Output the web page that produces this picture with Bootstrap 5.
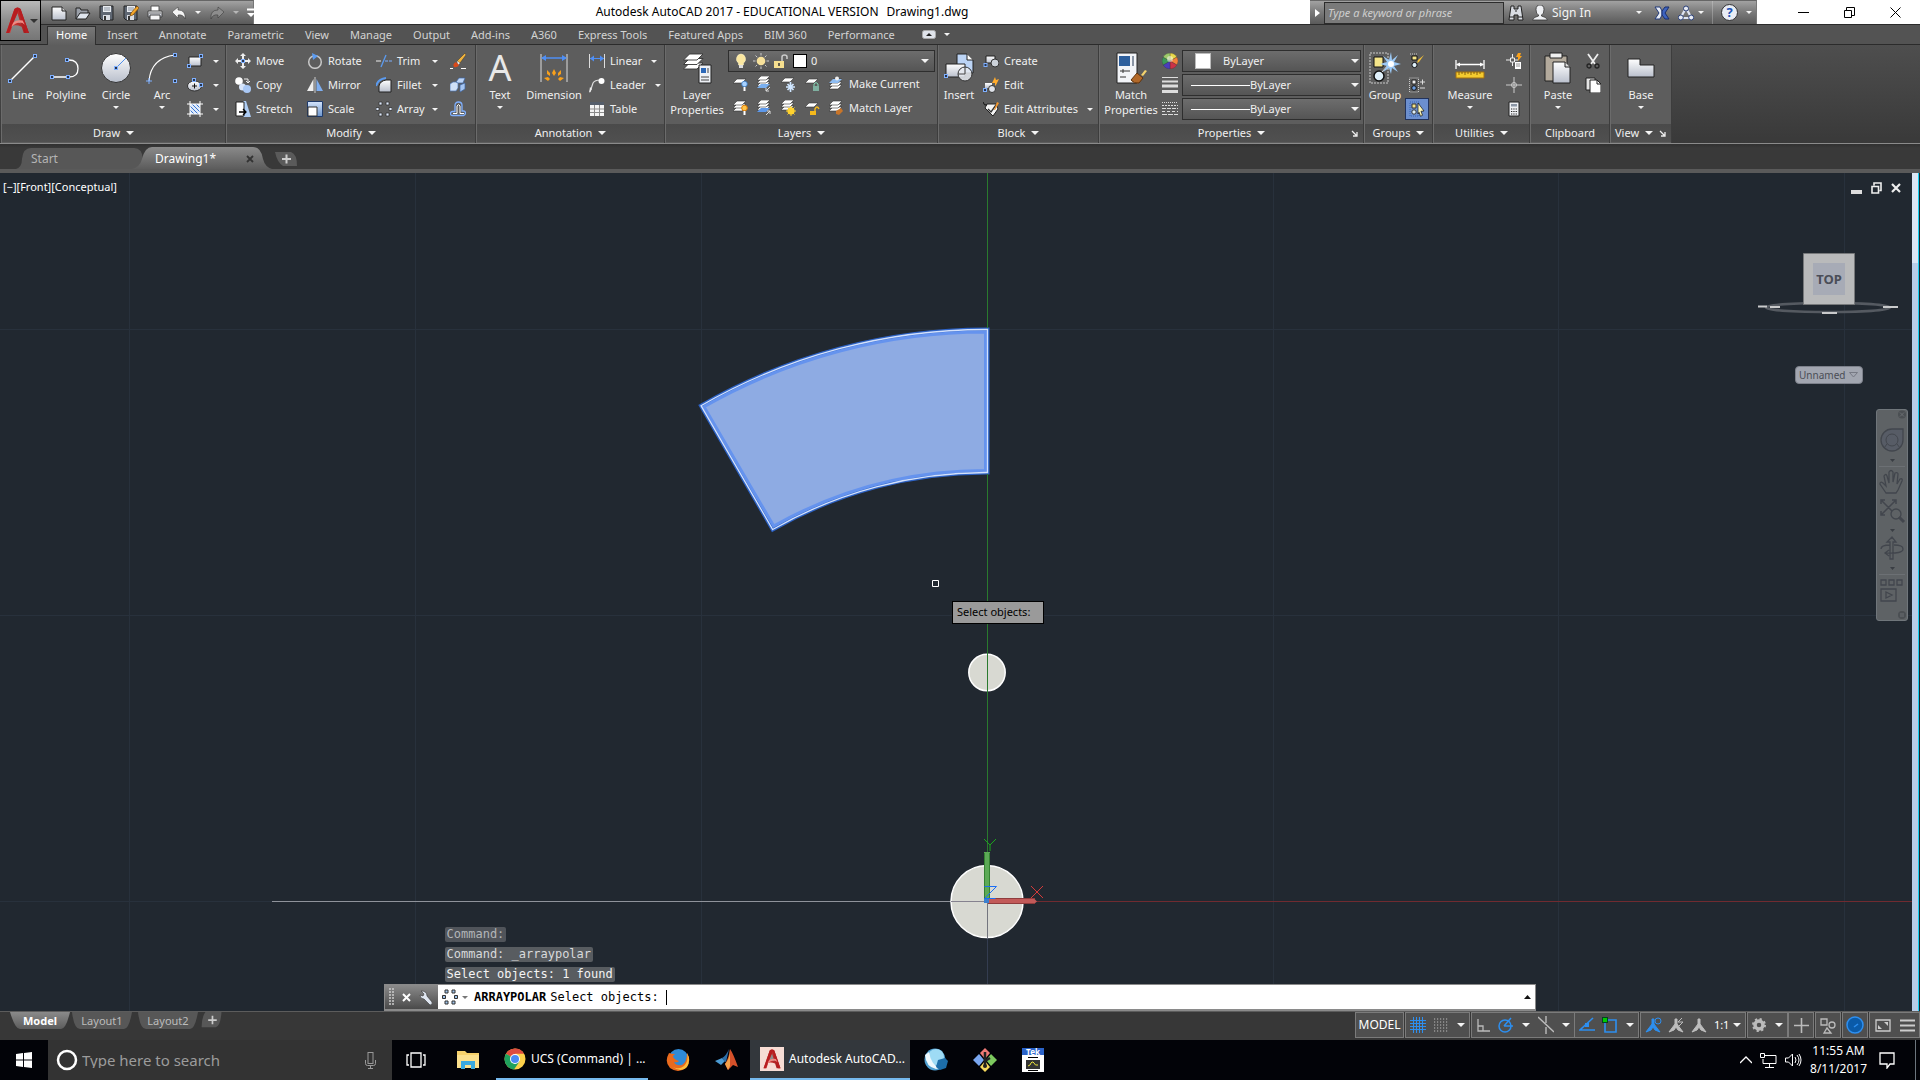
<!DOCTYPE html>
<html lang="en">
<head>
<meta charset="utf-8">
<meta name="viewport" content="width=device-width, initial-scale=1">
<title>Autodesk AutoCAD 2017</title>
<link rel="stylesheet" href="https://cdn.jsdelivr.net/npm/bootstrap@5.3.0/dist/css/bootstrap.min.css">
<style>
body{font-family:"Noto Sans","Open Sans",sans-serif;font-size:11px;line-height:16px;color:#f0f0f0;background:#373737;min-height:100vh;overflow:hidden}
button,select,input{font:inherit;color:inherit;background:none;border:0;padding:0;margin:0}
svg{display:block;flex:none}
.s16{width:16px;height:16px}.s32{width:32px;height:32px}
.tri{width:0;height:0;border:3px solid transparent;border-top:3px solid #f4f4f4;border-bottom:0;flex:none;display:inline-block}
.tri.big{border-width:4px 4px 0}
.tri.dark{border-top-color:#333}
.tri.grey{border-top-color:#777}
/* title bar */
.titlebar{height:24px;background:#fff;color:#000}
.appbtn{position:absolute;left:0;top:0;width:41px;height:41px;background:linear-gradient(#b9b9b9,#8d8d8d 50%,#767676);border:1px solid #000;z-index:5}
.chrome{background:linear-gradient(#a2a2a2,#7c7c7c 45%,#5a5a5a);border-top:1px solid #666;border-right:1px solid #777;color:#f4f4f4}
.qat{margin-left:41px;width:213px;padding-left:10px}
.qat button,.info button{flex:none;display:flex;align-items:center;justify-content:center}
.qat .redo{color:#8d8d8d}
.fs12{font-size:12px}
.info{width:447px}
.info .fold{width:14px}
.seek{width:180px;height:22px;background:#7a7a7a;border:1px solid #2c2c2c;color:#d6d6d6;font-style:italic;padding-left:3px}
.seek::placeholder{color:#cfcfcf;opacity:1}
.winbtns{width:163px;padding-right:2px}
.winbtns button{width:46px;display:flex;justify-content:center;align-items:center}
/* ribbon */
.rtabs{height:21px;background:#535353;border-top:1px solid #2b2b2b;border-bottom:1px solid #2b2b2b;padding-left:47px;gap:1px}
.rtabs .rtab{padding:0 10px;color:#d3d3d3;text-decoration:none;line-height:19px;white-space:nowrap}
.rtabs .rtab.on{padding:0 8px;margin-top:1px;background:linear-gradient(#787878,#5e5e5e);border:1px solid #2f2f2f;border-bottom:0;color:#fff;line-height:16px;height:19px}
.ribbon{height:99px;background:linear-gradient(#4e4e4e,#393939);border-bottom:1px solid #8a8a8a;padding-left:1px}
.panel{background:#5d5d5d;border-left:1px solid #6b6b6b;border-right:1px solid #3d3d3d;flex:none}
.pbody{height:79px;padding-top:4px}
.plabel{height:18px;background:linear-gradient(#4a4a4a,#505050);display:flex;align-items:center;justify-content:center;gap:6px}
.plabel .launch{position:absolute;right:4px;top:6px}
.bigb{display:flex;flex-direction:column;align-items:center;line-height:15px;white-space:nowrap;flex:none;padding-top:3px}
.bigb svg{margin-bottom:3px;overflow:visible}
.bigb .tri{margin-top:4px}
.rb{display:flex;align-items:center;height:24px;gap:5px;white-space:nowrap;text-align:left}
.rb .tri{margin-left:auto}
.combo{display:flex;align-items:center;border:1px solid #2e2e2e;background:linear-gradient(#6d6d6d,#555);height:22px}
.combo select{appearance:none;flex:1;min-width:0;outline:0}
.combo .tri{margin-right:1px}
.combos{gap:2px;padding-top:1px}
.swatch{background:#fff;width:14px;height:14px;border:1px solid #000;flex:none}
.swatch.soft{width:16px;height:16px;border-color:#bbb}
.lineseg{width:59px;height:1px;background:#fff;flex:none}
.lgrid{display:grid;grid-template-columns:repeat(4,24px) auto;height:24px;align-items:center;padding-left:4px}
.picked{background:#6c8fce;border:1px solid #22335c;height:22px;width:24px;margin:1px 0 0 -4px;padding-left:3px}
.w38{width:38px}.w40{width:40px}.w46{width:46px}.w54{width:54px}.w62{width:62px}.w69{width:69px}.w72{width:72px}
.p-draw{width:225px}.p-mod{width:250px}.p-ann{width:189px}.p-lay{width:273px}.p-blk{width:161px}.p-prop{width:265px}.p-grp{width:69px}.p-utl{width:97px}.p-clip{width:80px}.p-view{width:62px}
.p-draw .pbody{padding-left:1px}
.p-draw .drawmore{padding-left:6px}
.p-lay .pbody,.p-prop .pbody{padding-left:4px;padding-right:2px}
/* file tabs */
.ftabs{height:29px;background:linear-gradient(#303030,#393939 4px);border-bottom:4px solid #5a5a5a;padding:3px 0 0 20px;font-size:12px}
.ftab{height:22px;width:124px;position:relative;padding:2px 14px 0 11px;color:#b4b4b4;display:flex;align-items:center;text-decoration:none}
.ftab svg.shape{position:absolute;left:0;top:0;width:100%;height:100%;overflow:visible}
.ftab span,.ftab button{position:relative}
.newtab{margin:2px 0 0 6px}
/* canvas */
.space{background:#212830;flex:1;min-height:0}
.vscroll{width:7px;background:linear-gradient(#dbe6f5 90px,#b9cee9 90px);border-right:1px solid #16d0f2;margin-right:1px}
.draw{position:absolute;inset:0;width:100%;height:100%}
.vplabel{position:absolute;left:3px;top:6px;color:#fff}
.mdi{position:absolute;right:11px;top:9px;gap:9px}
.prompt{position:absolute;left:952px;top:428px;width:92px;height:23px;background:#9a9a9a;border:1px solid #000;color:#000;padding-left:4px;line-height:19px}
.ucsname{position:absolute;right:49px;top:193px;width:68px;height:18px;border-radius:4px;background:#a2a6b0;border:1px solid #7d818b;color:#4a4d55;font-size:10px;padding-left:3px}
.navbarv{position:absolute;right:4px;top:236px;width:32px;height:212px;background:#5e6265;border:1px solid #70767b;border-radius:3px}
.cmdlog{position:absolute;left:23.25%;bottom:29px;gap:5px}
.mono,.cmdlog div{font-family:"DejaVu Sans Mono","Liberation Mono",monospace;font-size:12px}
.cmdlog div{background:#585c60;border-radius:2px;padding:0 2px;line-height:15px;color:#f4f4f4}
.cmdlog div:nth-child(1){background:#50545a;color:#b3b6b9}
.cmdlog div:nth-child(2){color:#d8dadc}
.cmd{position:absolute;left:384px;right:376px;bottom:0;height:27px;background:#fff;border:1px solid #8a8a8a;border-bottom-width:2px;color:#000}
.cmdl{width:53px;background:linear-gradient(#8b8b8b,#4a4a4a)}
.cmd input{color:#000;outline:0;width:16ch}
.cmd .recent{margin:0 6px 0 4px}
.caretbar{width:1px;height:15px;background:#000}
.cmd label{font-weight:700}
/* status */
.status{height:29px;border-top:1px solid #5c5c5c}
.ltabs{padding-left:10px}
.ltab{height:18px;width:68px;position:relative;display:flex;justify-content:center;align-items:center;color:#bcbcbc;margin-right:-2px}
.ltab.first{width:60px}.ltab.plus{width:24px}
.ltab svg{position:absolute;inset:0;width:100%;height:100%}
.ltab span{position:relative;line-height:15px;padding-bottom:2px}
.stools{color:#bdbdbd}
.sg{height:26px;background:#4f4f4f;border:1px solid #7b7b7b;display:flex;align-items:center;justify-content:space-around;margin-right:1px;flex:none}
.sg button{display:flex;align-items:center}
.sg .lit{color:#2d8ff0}
.g26{width:26px}.g41{width:41px}.g49{width:49px}.g51{width:51px}.g65{width:65px}.g103{width:103px}.g106{width:106px}
/* taskbar */
.task{height:40px;background:#020308;color:#fff;font-size:12px}
.search{width:344px;background:#333;color:#999}
.search input{font-size:15px;color:#aaa;flex:1;outline:0;min-width:0}
.search input::placeholder{color:#9c9c9c;opacity:1}
.tb{display:flex;align-items:center;justify-content:center;height:40px;width:48px;flex:none;white-space:nowrap}
.tb.wide{width:56px}.tb.mid{width:51px}
.tb.run{border-bottom:2px solid #76b9ed;gap:5px;justify-content:flex-start;width:152px}
.tb.run.on{width:160px;background:#33373c;padding-left:10px}
.clock{line-height:18px;text-align:center}
.desk{width:5px;height:40px;margin-left:12px;border-left:1px solid #6c757d}
</style>
<script src="https://cdn.jsdelivr.net/npm/bootstrap@5.3.0/dist/js/bootstrap.bundle.min.js"></script>
</head>
<body class="d-flex flex-column vh-100">
<svg width="0" height="0" class="position-absolute" aria-hidden="true">
<defs>
<linearGradient id="gw" x1="0" y1="0" x2="0" y2="1"><stop offset="0" stop-color="#fff"/><stop offset="1" stop-color="#b9bfcc"/></linearGradient>
<linearGradient id="gb" x1="0" y1="0" x2="0" y2="1"><stop offset="0" stop-color="#d4e4fb"/><stop offset="1" stop-color="#6c95cc"/></linearGradient>
<linearGradient id="gt" x1="0" y1="0" x2="0" y2="1"><stop offset="0" stop-color="#8a8a8a"/><stop offset="1" stop-color="#5c5c5c"/></linearGradient>
<linearGradient id="gr" x1="0" y1="0" x2="1" y2="0"><stop offset="0" stop-color="#e04a45"/><stop offset="1" stop-color="#9c1518"/></linearGradient>
<g id="sheet"><path d="M5 0h9l-4 4H1z" fill="#fff" stroke="#333" stroke-width=".6"/></g>
<g id="stack"><use href="#sheet" y="8"/><use href="#sheet" y="5"/><use href="#sheet" y="2"/></g>
<g id="node"><rect x="-1.5" y="-1.5" width="3" height="3" fill="#26344d" stroke="#7fb0ff"/></g>
</defs>
<symbol id="A" viewBox="0 0 24 26"><path d="M1 25L9 2q3-3 6 0l8 23h-5l-2-6q-5-2-9-1l-2 7z" fill="url(#gr)"/><path d="M12 6l-4 9q4-1 7 1z" fill="#8f8f8f"/><path d="M9 2L1 25h3L13 3l7 22h3L15 2q-3-3-6 0z" fill="#b71d20"/><path d="M6 19q8-7 13-2l-2-4q-6-1-9 2z" fill="#f08a84"/></symbol>
<symbol id="new" viewBox="0 0 16 16"><path d="M1 2h10l4 4v9H1z" fill="url(#gw)" stroke="#222"/><path d="M11 2v4h4" fill="#ccc" stroke="#222"/></symbol>
<symbol id="open" viewBox="0 0 16 16"><path d="M1 14V3h4l1 2h7v3" fill="#9a9fa8" stroke="#222"/><path d="M1 14l4-6h10l-4 6z" fill="#dfe5ee" stroke="#222"/></symbol>
<symbol id="save" viewBox="0 0 16 16"><path d="M1 1h13v14H3l-2-2z" fill="#5f6773" stroke="#222"/><path d="M4 1h8v6H4z" fill="#e8ebf0"/><path d="M4 10h7v5H4z" fill="#d9dde5"/><path d="M5 3h6M5 5h6" stroke="#8a93a0"/><path d="M5 11h2v4H5z" fill="#333"/></symbol>
<symbol id="pen" viewBox="0 0 16 16"><path d="M14 1l2 2-6 7-3 1 1-3z" fill="#f4a62a" stroke="#6b3a00" stroke-width=".6"/></symbol>
<symbol id="print" viewBox="0 0 16 16"><path d="M4 1h8v6H4z" fill="#fff" stroke="#555"/><path d="M1 6h14v6H1z" fill="url(#gw)" stroke="#444"/><path d="M3 10h10v5H3z" fill="#f7f7f7" stroke="#444"/><path d="M2 8h12" stroke="#666"/></symbol>
<symbol id="undo" viewBox="0 0 16 16"><path d="M1 7l6-5v3q8 0 7 9q-2-5-7-4v3z" fill="currentColor" stroke="#333" stroke-width=".5"/></symbol>
<symbol id="line" viewBox="0 0 32 32"><path d="M3 29L28 4" stroke="#fff" stroke-width="1.4"/><use href="#node" x="3" y="29"/><use href="#node" x="28" y="4"/></symbol>
<symbol id="pline" viewBox="0 0 32 32"><path d="M2 25h17q9 0 9-8.500t-9-8.500h-2" fill="none" stroke="#fff" stroke-width="1.3"/><use href="#node" x="2" y="25"/><use href="#node" x="18" y="25"/><use href="#node" x="17" y="8"/></symbol>
<symbol id="circ" viewBox="0 0 32 32"><circle cx="16" cy="16" r="14.500" fill="url(#gw)" stroke="#333"/><path d="M16 16l10-10" stroke="#4f8fea"/><use href="#node" x="16" y="16"/></symbol>
<symbol id="arc" viewBox="0 0 32 32"><path d="M3 29Q5 6 29 3" fill="none" stroke="#fff" stroke-width="1.2"/><path d="M3 26v6M0 29h6" stroke="#7fb0ff"/><use href="#node" x="29" y="3"/><use href="#node" x="29" y="29"/></symbol>
<symbol id="rect" viewBox="0 0 16 16"><path d="M2 4h12v9H2z" fill="url(#gw)" stroke="#222"/><use href="#node" x="2" y="13"/><use href="#node" x="14" y="3"/></symbol>
<symbol id="ell" viewBox="0 0 16 16"><ellipse cx="7.500" cy="9" rx="7" ry="5" fill="url(#gw)" stroke="#333"/><path d="M7.500 6.500v5M5 9h5" stroke="#111"/><use href="#node" x="7" y="3"/><use href="#node" x="14" y="8"/></symbol>
<symbol id="hatch" viewBox="0 0 16 16"><path d="M3 3h10v10H3z" fill="#dce9fb"/><path d="M3 5l8 8M3 9l4 4M5 3l8 8M9 3l4 4" stroke="#3a75cf"/><path d="M0 3h16M0 13h16M3 0v16M13 0v16" stroke="#fff"/></symbol>
<symbol id="move" viewBox="0 0 16 16"><path d="M8 0l3 3H9v3H7V3H5zM8 16l3-3H9v-3H7v3H5zM0 8l3-3v2h3v2H3v2zM16 8l-3-3v2h-3v2h3v2z" fill="#eee"/><use href="#node" x="8" y="8"/></symbol>
<symbol id="rot" viewBox="0 0 16 16"><circle cx="8" cy="9" r="6.300" fill="none" stroke="#c9c9c9" stroke-width="1.5"/><path d="M5 0l6 3-5 4z" fill="#5b9bf0"/></symbol>
<symbol id="trim" viewBox="0 0 16 16"><path d="M0 8h5" stroke="#eee"/><path d="M10 2L5 14" stroke="#5b9bf0" stroke-width="1.300"/><path d="M9 8h7" stroke="#7fb0ff" stroke-dasharray="3 1"/></symbol>
<symbol id="erase" viewBox="0 0 16 16"><path d="M15 0l1 2-6 8-3-2z" fill="#f0b23c" stroke="#333" stroke-width=".5"/><path d="M7 8l3 2-2 2z" fill="#eee"/><path d="M6 9l3 3q-2 3-5 2-2-3 2-5z" fill="#d94a1a"/><path d="M0 15.500h3M11 15.500h5" stroke="#fff"/></symbol>
<symbol id="copy" viewBox="0 0 16 16"><circle cx="4" cy="4" r="3.800" fill="#fff"/><circle cx="7.500" cy="10" r="3.500" fill="#d7e5fa"/><circle cx="12" cy="12" r="4" fill="#a9c8f5"/><path d="M9 2h4v4m-2-2l2 2 2-2" fill="none" stroke="#eee"/></symbol>
<symbol id="mirror" viewBox="0 0 16 16"><path d="M6.500 2v12H0z" fill="#eee"/><path d="M9.500 2v12H16z" fill="#7eaef0"/><path d="M8 0v16" stroke="#ccc"/></symbol>
<symbol id="fillet" viewBox="0 0 16 16"><path d="M3 15V9q1-5 7-6h5v12z" fill="url(#gw)" stroke="#222"/><path d="M0 9Q2 2 10 1" fill="none" stroke="#5b9bf0" stroke-width="2"/></symbol>
<symbol id="expl" viewBox="0 0 16 16"><path d="M0 7l3-2h5v6l-2 3H0z" fill="#cfe0f7" stroke="#4a76b5" stroke-width=".7"/><path d="M6 5l3-4h6l-2 5H8z" fill="#bcd4f7" stroke="#3c66a3" stroke-width=".7"/><path d="M10 8l5-2v6l-5 3z" fill="#a5c5f2" stroke="#3c66a3" stroke-width=".7"/></symbol>
<symbol id="stretch" viewBox="0 0 16 16"><path d="M8 0h3l5 16H8z" fill="#aecdf4"/><path d="M1 1h8v14H1z" fill="#fff" stroke="#222"/><path d="M4 11h7m-3-3l3 3-3 3" fill="none" stroke="#000" stroke-width="1.300"/></symbol>
<symbol id="scale" viewBox="0 0 16 16"><path d="M.5.500h15v15H.5z" fill="url(#gb)" stroke="#1e3a6b"/><path d="M1 6h9v9H1z" fill="#fff" stroke="#333"/></symbol>
<symbol id="array" viewBox="0 0 16 16"><path d="M3 1h3v3H3zM10 1h3v3h-3zM0 6.500h3v3H0zM13 6.500h3v3h-3zM3 12h3v3H3zM10 12h3v3h-3z" fill="#dde8fa" stroke="#333" stroke-width=".8"/></symbol>
<symbol id="arrayd" viewBox="0 0 16 16"><path d="M3 1h3v3H3zM10 1h3v3h-3zM.5 6.500h3v3h-3zM12.500 6.500h3v3h-3zM3 12h3v3H3zM10 12h3v3h-3z" fill="#9ec3ea" stroke="#333"/></symbol>
<symbol id="offset" viewBox="0 0 16 16"><path d="M5 11V4.500Q5 1 8.500 1T12 4.500V10h1.500q2 0 2 2t-2 2.500h-11q-2 0-2-2t2-2H5" fill="none" stroke="#7fb0ff" stroke-width="1.300"/><path d="M3 12.500h4V5q1.500-3 3 0v7.500h4" fill="none" stroke="#fff"/></symbol>
<symbol id="dim" viewBox="0 0 32 32"><path d="M3 2v28M29 2v28" stroke="#ddd"/><path d="M4 6h24" stroke="#4f8ff5" stroke-width="1.500"/><path d="M3 6l5-3v6zM29 6l-5-3v6z" fill="#4f8ff5"/><g fill="#f8a01b"><path d="M16 17l2 4-2 3-2-3zM9 18l3 3v3l-3-2zM23 18l-3 3v3l3-2zM6 26l4-1 2 2-2 2zM26 26l-4-1-2 2 2 2z"/></g></symbol>
<symbol id="lin" viewBox="0 0 16 16"><path d="M.5 1v14M15.500 1v14" stroke="#ddd"/><path d="M1 5.500h14" stroke="#4f8ff5"/><path d="M1 5.500l4-3v6zM15 5.500l-4-3v6z" fill="#4f8ff5"/></symbol>
<symbol id="lead" viewBox="0 0 16 16"><path d="M1 15L4 6q2-3 7-3" fill="none" stroke="#ddd" stroke-width="1.200"/><circle cx="12.500" cy="4" r="3" fill="#fff"/><path d="M0 16l1-6 2 2z" fill="#eee"/></symbol>
<symbol id="table" viewBox="0 0 16 16"><path d="M1 1h14v14H1z" fill="#f4f4f4"/><path d="M1 1h14v3H1z" fill="#555e6b"/><path d="M1 8h14M1 11.500h14M5.500 4v11M10.500 4v11" stroke="#8b8b8b"/></symbol>
<symbol id="layp" viewBox="0 0 32 32"><g transform="translate(1 -1) scale(1.500)"><use href="#stack"/></g><path d="M18 13h12v18H18z" fill="#eef1f6" stroke="#222"/><path d="M20 16h5v5h-5z" fill="#2c68b8"/><path d="M27 16v5M20 25h8M20 28h8" stroke="#444"/></symbol>
<symbol id="bulb" viewBox="0 0 16 16"><path d="M8 1a5 5 0 0 0-2.500 9v2h5v-2A5 5 0 0 0 8 1z" fill="#fbe7a0" stroke="#fff6cf" stroke-width=".5"/><path d="M6 12h4v3H6z" fill="#ddd"/></symbol>
<symbol id="sun" viewBox="0 0 16 16"><path d="M8 0v16M0 8h16M2.500 2.500l11 11M13.500 2.500l-11 11" stroke="#ccc" stroke-dasharray="2.500 11"/><circle cx="8" cy="8" r="4.300" fill="#f7e19b"/></symbol>
<symbol id="lock" viewBox="0 0 16 16"><path d="M9 8V4q0-2 2.500-2T14 4v2" fill="none" stroke="#ccc" stroke-width="1.500"/><path d="M1 8h10v7H1z" fill="#f6df8f"/><path d="M6 10v3" stroke="#333" stroke-width="1.500"/></symbol>
<symbol id="l1" viewBox="0 0 16 16"><use href="#sheet" y="3"/><circle cx="12.500" cy="8" r="2.800" fill="#a8d2ff" stroke="#2f78c8" stroke-width=".7"/><path d="M12.500 11v4" stroke="#fff" stroke-width="2"/></symbol>
<symbol id="l2" viewBox="0 0 16 16"><use href="#stack" y="-2"/><path d="M5 8h9l-4 4H1z" fill="#7ab0f0"/><path d="M14 11l-4 4m0-3v3h3" stroke="#ddd" fill="none"/></symbol>
<symbol id="l3" viewBox="0 0 16 16"><use href="#sheet" y="2"/><path d="M10.500 6v10M6 11h9M7.500 8l6 6M13.500 8l-6 6" stroke="#cfe6ff" stroke-width="1.700"/></symbol>
<symbol id="l4" viewBox="0 0 16 16"><use href="#sheet" y="3"/><path d="M9 10h6v5H9z" fill="#7fb0a0"/><path d="M10 10V8q2-3 4 0v2" fill="none" stroke="#8db"/></symbol>
<symbol id="l5" viewBox="0 0 16 16"><use href="#stack" y="1"/><path d="M5 3h9l-4 4H1z" fill="#8dbcf2"/><circle cx="9" cy="2.500" r="2" fill="#eee"/></symbol>
<symbol id="m1" viewBox="0 0 16 16"><use href="#stack" y="-1"/><circle cx="12.500" cy="8" r="2.800" fill="#ffc54a" stroke="#e07c00"/><path d="M12.500 11v4" stroke="#fff" stroke-width="2"/></symbol>
<symbol id="m2" viewBox="0 0 16 16"><use href="#stack" y="-2"/><path d="M5 8h9l-4 4H1z" fill="#5d98ea"/><path d="M10 15l4-4m-3 0h3v3" stroke="#ddd" fill="none"/></symbol>
<symbol id="m3" viewBox="0 0 16 16"><use href="#stack" y="-2"/><circle cx="11" cy="11" r="3.600" fill="#ffd22e"/><path d="M11 6v10M6 11h10M7.500 7.500l7 7M14.500 7.500l-7 7" stroke="#ffd22e"/></symbol>
<symbol id="m4" viewBox="0 0 16 16"><use href="#sheet" y="3"/><path d="M6 11h6v4H6z" fill="#f5b91c"/><path d="M11 11V9q2-4 4 0" fill="none" stroke="#f5b91c" stroke-width="1.400"/></symbol>
<symbol id="m5" viewBox="0 0 16 16"><use href="#stack" y="-1"/><path d="M8 11l5-3 2 3-4 4-3-1z" fill="#c8752a"/></symbol>
<symbol id="insert" viewBox="0 0 32 32"><path d="M14 2h10l6 6v13H14z" fill="#bcd4f5" stroke="#222"/><path d="M24 2v6h6" fill="#fff" stroke="#222"/><path d="M3 12h19v13H3z" fill="url(#gw)" stroke="#222"/><circle cx="22" cy="22" r="7" fill="#e6eaf0" fill-opacity=".85" stroke="#333"/><path d="M15 22h7v-7" fill="none" stroke="#444"/><use href="#node" x="3" y="24"/></symbol>
<symbol id="create" viewBox="0 0 16 16"><path d="M3 3h9v7H3z" fill="url(#gw)" stroke="#222"/><circle cx="12" cy="10" r="4" fill="#ccd2da" stroke="#333"/><use href="#node" x="2.500" y="12"/></symbol>
<symbol id="edit" viewBox="0 0 16 16"><path d="M2 6h7v5H2z" fill="url(#gw)"/><circle cx="9" cy="12" r="3.500" fill="#dfe3ea" stroke="#333"/><path d="M12 0l1 3 3-1-3 6-1 1 0-3-3 0z" fill="#ffab2d"/><use href="#node" x="2" y="13"/></symbol>
<symbol id="attr" viewBox="0 0 16 16"><path d="M4 3h9l2 5-5 7-8-8z" fill="#f4f4f4" stroke="#222"/><path d="M5 8l3 3 5-7" fill="none" stroke="#333" stroke-width="1.400"/><path d="M14 1l2 1-4 7-1 0z" fill="#f4962a"/><path d="M0 1q1 4 4 3" fill="none" stroke="#111"/></symbol>
<symbol id="mprop" viewBox="0 0 32 32"><path d="M2 1h20v30H2z" fill="#f2f4f8" stroke="#222"/><path d="M4 4h11v10H4z" fill="#2d5f9d"/><path d="M18 4v10" stroke="#8a95a5" stroke-width="2"/><path d="M5 19h10M8 17v4M5 25h6" stroke="#333"/><path d="M30 18l2 1-4 5-2-1z" fill="#f5d36d"/><path d="M22 21l6 5-4 5q-5 1-8-3z" fill="#b2692a" stroke="#5e330e"/></symbol>
<symbol id="wheel" viewBox="0 0 16 16"><g stroke="#333" stroke-width=".3"><path d="M8 8V0a8 8 0 0 1 6.900 4z" fill="#e8d94a"/><path d="M8 8l6.900-4a8 8 0 0 1 0 8z" fill="#f5813a"/><path d="M8 8l6.900 4A8 8 0 0 1 8 16z" fill="#cc3147"/><path d="M8 8v8a8 8 0 0 1-6.900-4z" fill="#4a3dbb"/><path d="M8 8l-6.900 4a8 8 0 0 1 0-8z" fill="#3c9958"/><path d="M8 8L1.100 4A8 8 0 0 1 8 0z" fill="#9ecb6a"/></g><circle cx="8" cy="6" r="3" fill="#fff" fill-opacity=".5"/></symbol>
<symbol id="lw" viewBox="0 0 16 16"><path d="M0 .5h16" stroke="#ddd"/><path d="M0 4.500h16" stroke="#ddd" stroke-width="2"/><path d="M0 9h16M0 14.500h16" stroke="#ddd" stroke-width="3"/></symbol>
<symbol id="lt" viewBox="0 0 16 16"><g stroke="#ddd"><path d="M0 1.500h16" stroke-dasharray="1 1"/><path d="M0 4.500h16" stroke-dasharray="2 1"/><path d="M0 7.500h16" stroke-dasharray="4 1"/><path d="M0 10.500h16" stroke-dasharray="3 2"/><path d="M0 13.500h16" stroke-dasharray="5 1"/></g></symbol>
<symbol id="group" viewBox="0 0 32 32"><path d="M1 1h18v30H1z" fill="none" stroke="#ccc" stroke-dasharray="2 1"/><path d="M5 5h9v10H5z" fill="#f5e58a" stroke="#111"/><circle cx="10" cy="24" r="5" fill="#dff0fa" stroke="#111" stroke-width="1.500"/><path d="M13 20l7-8" stroke="#ddd"/><path d="M22 0l1 8 6-5-4 7 7 2-7 2 4 6-6-4-1 6-2-6-6 4 4-6-7-2 7-2-4-6 6 4z" fill="#9cc9f5"/><circle cx="22" cy="12" r="3" fill="#fff"/></symbol>
<symbol id="g1" viewBox="0 0 16 16"><path d="M1 1h8" stroke="#ccc" stroke-dasharray="1 1"/><path d="M3 3h5v4H3z" fill="#f5e58a" stroke="#111"/><circle cx="5.500" cy="12" r="2.600" fill="#dff0fa" stroke="#111"/><path d="M15 2l-5 7-2 1 1-3z" fill="#f5c136"/></symbol>
<symbol id="g2" viewBox="0 0 16 16"><path d="M.5 1h9v14h-9z" fill="none" stroke="#ccc" stroke-dasharray="1 1"/><path d="M3 3h4v4H3z" fill="#eee" stroke="#222"/><circle cx="5" cy="11" r="2.300" fill="#6c9de0" stroke="#111"/><path d="M11 5h5M13.500 2.500v5M11 11h5" stroke="#ddd"/></symbol>
<symbol id="g3" viewBox="0 0 16 16"><path d="M1 1h9v14H1z" fill="none" stroke="#3263b8" stroke-dasharray="1 1"/><path d="M3 3h4v4H3z" fill="#f5e58a" stroke="#333"/><circle cx="5" cy="11" r="2.200" fill="#dff0fa" stroke="#333"/><path d="M9 2l6 8-3 .3 1.500 4-2 1-1.500-4L9 13z" fill="#fbf6b8" stroke="#111" stroke-width=".7"/></symbol>
<symbol id="meas" viewBox="0 0 32 32"><path d="M2 8v9M30 8v9M3 12.500h26" stroke="#fff" stroke-width="1.300"/><path d="M2 12.500l4-2v4zM30 12.500l-4-2v4z" fill="#fff"/><path d="M2 20h28v6H2z" fill="#f4cb2f" stroke="#a4700f" stroke-width="1"/><path d="M5 20v3M8 20v2M11 20v3M14 20v2M17 20v3M20 20v2M23 20v3M26 20v2" stroke="#6e4a05" stroke-width=".8"/></symbol>
<symbol id="u1" viewBox="0 0 16 16"><path d="M0 7h4M9 7h3M6.500 1v4M6.500 9v4" stroke="#eee"/><path d="M4.500 5h4v4h-4z" fill="none" stroke="#eee"/><path d="M12 0l3 0-1 3h2l-4 5v-4h-2z" fill="#f9a11b"/><path d="M9 9h6v7H9z" fill="#fff"/><path d="M10.500 11h1m1 0h1m-3 2h1m1 0h1" stroke="#222"/></symbol>
<symbol id="u2" viewBox="0 0 16 16"><path d="M0 8h16M8 0v16" stroke="#ccc"/><circle cx="8" cy="8" r="2.500" fill="none" stroke="#ccc"/></symbol>
<symbol id="u3" viewBox="0 0 16 16"><path d="M3 1h10v14H3z" fill="#eef0f4" stroke="#222"/><path d="M5 3h6v2.500H5z" fill="#8b96a6"/><path d="M5 8h6M5 10.500h6M5 13h6" stroke="#222" stroke-dasharray="1.300 1"/></symbol>
<symbol id="paste" viewBox="0 0 32 32"><path d="M3 4h22v25H3z" fill="#b3aa9c" stroke="#222"/><path d="M8 1h12v5H8z" fill="#f0f0f0" stroke="#222"/><path d="M11 10h12l5 5v16H11z" fill="url(#gw)" stroke="#222"/><path d="M23 10v5h5" fill="#ddd" stroke="#222"/></symbol>
<symbol id="cut" viewBox="0 0 16 16"><path d="M3 1l7 10M13 1L6 11" stroke="#eee" stroke-width="1.800"/><circle cx="4" cy="13" r="2" fill="none" stroke="#222" stroke-width="1.300"/><circle cx="12" cy="13" r="2" fill="none" stroke="#222" stroke-width="1.300"/></symbol>
<symbol id="cp" viewBox="0 0 16 16"><path d="M1 1h9v12H1z" fill="#e5e5e5" stroke="#222"/><path d="M5 3h7l4 4v9H5z" fill="#fff" stroke="#222"/><path d="M12 3v4h4" fill="none" stroke="#222"/></symbol>
<symbol id="base" viewBox="0 0 32 32"><path d="M3 7h12v6h14v12H3z" fill="url(#gw)" stroke="#222"/></symbol>
<symbol id="launch" viewBox="0 0 8 8"><path d="M1 1l5 5M6 2v4H2" fill="none" stroke="#eee" stroke-width="1.300"/></symbol>
<symbol id="cadman" viewBox="0 0 16 16"><path d="M7 2h2v5l6 8-5-2-2-3-2 3-5 2 6-8z" fill="currentColor" stroke="currentColor"/></symbol>
</svg>

<header class="position-relative flex-shrink-0">
<button class="appbtn d-flex align-items-center" aria-label="Application menu"><svg width="25" height="27" class="ms-1"><use href="#A"/></svg><i class="tri big dark"></i></button>
<div class="titlebar d-flex">
 <div class="chrome qat d-flex align-items-center gap-2">
  <button aria-label="New"><svg class="s16"><use href="#new"/></svg></button>
  <button aria-label="Open"><svg class="s16"><use href="#open"/></svg></button>
  <button aria-label="Save"><svg class="s16"><use href="#save"/></svg></button>
  <button aria-label="Save as"><svg class="s16"><use href="#save"/><use href="#pen"/></svg></button>
  <button aria-label="Plot"><svg class="s16"><use href="#print"/></svg></button>
  <button aria-label="Undo"><svg class="s16"><use href="#undo"/></svg></button>
  <button aria-label="Undo list"><i class="tri"></i></button>
  <button aria-label="Redo" class="redo"><svg class="s16" viewBox="0 0 16 16"><g transform="translate(16 0) scale(-1 1)"><use href="#undo" width="16" height="16"/></g></svg></button>
  <button aria-label="Redo list"><i class="tri opacity-50"></i></button>
  <button aria-label="Customize toolbar"><svg width="8" height="10"><path d="M0 1.500h8" stroke="#fff" stroke-width="2"/><path d="M0 5h8L4 9z" fill="#fff"/></svg></button>
 </div>
 <div class="fs12 flex-fill d-flex justify-content-center align-items-center gap-2"><span>Autodesk AutoCAD 2017 - EDUCATIONAL VERSION</span><span>Drawing1.dwg</span></div>
 <div class="chrome info d-flex align-items-center">
  <button aria-label="Collapse search" class="fold"><svg width="5" height="8"><path d="M0 0l5 4-5 4z" fill="#fff"/></svg></button>
  <input class="seek" aria-label="Search help" placeholder="Type a keyword or phrase">
  <button aria-label="Search" class="ms-1"><svg class="s16" viewBox="0 0 16 16"><path d="M3 1h3v3h4V1h3l2 14h-5v-5H6v5H1z" fill="#d9dde4" stroke="#222"/><path d="M7 6h2M2 12h4M10 12h4" stroke="#222"/></svg></button>
  <button aria-label="Account" class="ms-2"><svg class="s16" viewBox="0 0 16 16"><path d="M8 0q4 0 4 4.500T9.500 10v1q5 1 6 4H.5q1-3 6-4v-1Q4 9 4 4.500T8 0z" fill="#eef0f4" stroke="#333" stroke-width=".8"/></svg></button>
  <button class="ms-1 fs12">Sign In</button>
  <button aria-label="Sign in menu" class="ms-auto"><i class="tri"></i></button>
  <button aria-label="Exchange apps" class="ms-2 ps-1"><svg width="16" height="16" viewBox="0 0 16 16"><path d="M1 2h5l2 4v4l-2 4H1l4-6z" fill="#e8ecf4" stroke="#223a7a"/><path d="M15 2h-4L8 6v4l3 4h4l-4-6z" fill="#3e64c0" stroke="#1b2f6d"/></svg></button>
  <button aria-label="A360" class="ms-2"><svg width="16" height="16" viewBox="0 0 16 16"><path d="M8 3L2.500 13h11z" fill="none" stroke="#dfe5f2" stroke-width="2.200"/><circle cx="8" cy="3.500" r="2.500" fill="#e8ecf4" stroke="#2a3f78"/><circle cx="2.800" cy="12.500" r="2.500" fill="#e8ecf4" stroke="#2a3f78"/><circle cx="13.200" cy="12.500" r="2.500" fill="#e8ecf4" stroke="#2a3f78"/></svg></button>
  <button aria-label="A360 menu" class="ms-1"><i class="tri"></i></button>
  <span class="vr mx-2"></span>
  <button aria-label="Help"><svg width="17" height="17"><circle cx="8.500" cy="8.500" r="8" fill="#e9edf5" stroke="#333"/><text x="8.500" y="13" text-anchor="middle" font-size="13" font-weight="700" fill="#2252b5">?</text></svg></button>
  <button aria-label="Help menu" class="mx-1 ps-1"><i class="tri"></i></button>
 </div>
 <div class="winbtns d-flex justify-content-end">
  <button aria-label="Minimize"><svg width="11" height="11"><path d="M0 5.500h11" stroke="#000"/></svg></button>
  <button aria-label="Restore"><svg width="11" height="11"><path d="M.5 3.500h7v7h-7zM2.500 3V.500h8v8H8" fill="none" stroke="#000"/></svg></button>
  <button aria-label="Close"><svg width="11" height="11"><path d="M.5.500l10 10M10.500.500l-10 10" stroke="#000"/></svg></button>
 </div>
</div>
<nav class="rtabs d-flex">
 <a class="rtab on" href="#">Home</a><a class="rtab" href="#">Insert</a><a class="rtab" href="#">Annotate</a><a class="rtab" href="#">Parametric</a><a class="rtab" href="#">View</a><a class="rtab" href="#">Manage</a><a class="rtab" href="#">Output</a><a class="rtab" href="#">Add-ins</a><a class="rtab" href="#">A360</a><a class="rtab" href="#">Express Tools</a><a class="rtab" href="#">Featured Apps</a><a class="rtab" href="#">BIM 360</a><a class="rtab" href="#">Performance</a>
 <button class="d-flex align-items-center gap-2 ms-3" aria-label="Minimize ribbon"><svg width="14" height="9"><rect x=".5" y=".5" width="13" height="8" rx="2" fill="#dfe3ea" stroke="#aaa"/><path d="M4 6l3-3 3 3z" fill="#222"/></svg><i class="tri"></i></button>
</nav>

<div class="ribbon d-flex">
 <section class="panel p-draw">
  <div class="pbody d-flex">
   <button class="bigb w40"><svg class="s32"><use href="#line"/></svg>Line</button>
   <button class="bigb w46"><svg class="s32"><use href="#pline"/></svg>Polyline</button>
   <button class="bigb w54"><svg class="s32"><use href="#circ"/></svg>Circle<i class="tri"></i></button>
   <button class="bigb w38"><svg class="s32"><use href="#arc"/></svg>Arc<i class="tri"></i></button>
   <div class="drawmore w38">
    <button class="rb w-100" aria-label="Rectangle"><svg class="s16"><use href="#rect"/></svg><i class="tri"></i></button>
    <button class="rb w-100" aria-label="Ellipse"><svg class="s16"><use href="#ell"/></svg><i class="tri"></i></button>
    <button class="rb w-100" aria-label="Hatch"><svg class="s16"><use href="#hatch"/></svg><i class="tri"></i></button>
   </div>
  </div>
  <button class="plabel w-100">Draw <i class="tri big"></i></button>
 </section>
 <section class="panel p-mod">
  <div class="pbody d-flex ps-2">
   <div class="w72">
    <button class="rb"><svg class="s16"><use href="#move"/></svg>Move</button>
    <button class="rb"><svg class="s16"><use href="#copy"/></svg>Copy</button>
    <button class="rb"><svg class="s16"><use href="#stretch"/></svg>Stretch</button>
   </div>
   <div class="w69">
    <button class="rb"><svg class="s16"><use href="#rot"/></svg>Rotate</button>
    <button class="rb"><svg class="s16"><use href="#mirror"/></svg>Mirror</button>
    <button class="rb"><svg class="s16"><use href="#scale"/></svg>Scale</button>
   </div>
   <div class="w62">
    <button class="rb w-100"><svg class="s16"><use href="#trim"/></svg>Trim<i class="tri"></i></button>
    <button class="rb w-100"><svg class="s16"><use href="#fillet"/></svg>Fillet<i class="tri"></i></button>
    <button class="rb w-100"><svg class="s16"><use href="#array"/></svg>Array<i class="tri"></i></button>
   </div>
   <div class="ms-2 ps-1">
    <button class="rb" aria-label="Erase"><svg class="s16"><use href="#erase"/></svg></button>
    <button class="rb" aria-label="Explode"><svg class="s16"><use href="#expl"/></svg></button>
    <button class="rb" aria-label="Offset"><svg class="s16"><use href="#offset"/></svg></button>
   </div>
  </div>
  <button class="plabel w-100">Modify <i class="tri big"></i></button>
 </section>
 <section class="panel p-ann">
  <div class="pbody d-flex">
   <button class="bigb w46"><svg class="s32"><text x="16" y="29" text-anchor="middle" font-size="36" fill="#e8e8e8">A</text></svg>Text<i class="tri"></i></button>
   <button class="bigb w62"><svg class="s32"><use href="#dim"/></svg>Dimension</button>
   <div class="ps-1">
    <button class="rb"><svg class="s16"><use href="#lin"/></svg>Linear<i class="tri ms-1"></i></button>
    <button class="rb"><svg class="s16"><use href="#lead"/></svg>Leader<i class="tri ms-1"></i></button>
    <button class="rb"><svg class="s16"><use href="#table"/></svg>Table</button>
   </div>
  </div>
  <button class="plabel w-100">Annotation <i class="tri big"></i></button>
 </section>
 <section class="panel p-lay">
  <div class="pbody d-flex">
   <button class="bigb w54"><svg class="s32"><use href="#layp"/></svg>Layer<br>Properties</button>
   <div class="flex-fill ps-1 combos">
    <div class="combo gap-1 px-1 mb-0"><svg class="s16"><use href="#bulb"/></svg><svg class="s16"><use href="#sun"/></svg><svg class="s16"><use href="#lock"/></svg><span class="swatch"></span><select aria-label="Layer"><option>0</option></select><i class="tri big"></i></div>
    <div class="lgrid"><button aria-label="Off"><svg class="s16"><use href="#l1"/></svg></button><button aria-label="Isolate"><svg class="s16"><use href="#l2"/></svg></button><button aria-label="Freeze"><svg class="s16"><use href="#l3"/></svg></button><button aria-label="Lock"><svg class="s16"><use href="#l4"/></svg></button><button class="rb"><svg class="s16"><use href="#l5"/></svg>Make Current</button></div>
    <div class="lgrid"><button aria-label="Turn all on"><svg class="s16"><use href="#m1"/></svg></button><button aria-label="Unisolate"><svg class="s16"><use href="#m2"/></svg></button><button aria-label="Thaw"><svg class="s16"><use href="#m3"/></svg></button><button aria-label="Unlock"><svg class="s16"><use href="#m4"/></svg></button><button class="rb"><svg class="s16"><use href="#m5"/></svg>Match Layer</button></div>
   </div>
  </div>
  <button class="plabel w-100">Layers <i class="tri big"></i></button>
 </section>
 <section class="panel p-blk">
  <div class="pbody d-flex">
   <button class="bigb w40"><svg class="s32"><use href="#insert"/></svg>Insert</button>
   <div class="ps-1">
    <button class="rb"><svg class="s16"><use href="#create"/></svg>Create</button>
    <button class="rb"><svg class="s16"><use href="#edit"/></svg>Edit</button>
    <button class="rb"><svg class="s16"><use href="#attr"/></svg>Edit Attributes<i class="tri ms-1"></i></button>
   </div>
  </div>
  <button class="plabel w-100">Block <i class="tri big"></i></button>
 </section>
 <section class="panel p-prop">
  <div class="pbody d-flex">
   <button class="bigb w54"><svg class="s32"><use href="#mprop"/></svg>Match<br>Properties</button>
   <div class="px-1">
    <div class="rb"><svg class="s16"><use href="#wheel"/></svg></div><div class="rb"><svg class="s16"><use href="#lw"/></svg></div><div class="rb"><svg class="s16"><use href="#lt"/></svg></div>
   </div>
   <div class="flex-fill d-flex flex-column combos">
    <div class="combo ps-2 gap-2"><span class="swatch soft ms-1 me-1"></span><select aria-label="Object color"><option>ByLayer</option></select><i class="tri big"></i></div>
    <div class="combo ps-2"><span class="lineseg"></span><select aria-label="Lineweight"><option>ByLayer</option></select><i class="tri big"></i></div>
    <div class="combo ps-2"><span class="lineseg"></span><select aria-label="Linetype"><option>ByLayer</option></select><i class="tri big"></i></div>
   </div>
  </div>
  <button class="plabel w-100 position-relative">Properties <i class="tri big"></i><svg class="launch" width="8" height="8"><use href="#launch"/></svg></button>
 </section>
 <section class="panel p-grp">
  <div class="pbody d-flex">
   <button class="bigb w40"><svg class="s32"><use href="#group"/></svg>Group</button>
   <div class="ps-1">
    <button class="rb" aria-label="Ungroup"><svg class="s16"><use href="#g1"/></svg></button>
    <button class="rb" aria-label="Group edit"><svg class="s16"><use href="#g2"/></svg></button>
    <button class="rb picked" aria-label="Group selection on"><svg class="s16"><use href="#g3"/></svg></button>
   </div>
  </div>
  <button class="plabel w-100">Groups <i class="tri big"></i></button>
 </section>
 <section class="panel p-utl">
  <div class="pbody d-flex">
   <button class="bigb w72"><svg class="s32"><use href="#meas"/></svg>Measure<i class="tri"></i></button>
   <div>
    <button class="rb" aria-label="Quick select"><svg class="s16"><use href="#u1"/></svg></button>
    <button class="rb" aria-label="ID point"><svg class="s16"><use href="#u2"/></svg></button>
    <button class="rb" aria-label="Calculator"><svg class="s16"><use href="#u3"/></svg></button>
   </div>
  </div>
  <button class="plabel w-100">Utilities <i class="tri big"></i></button>
 </section>
 <section class="panel p-clip">
  <div class="pbody d-flex">
   <button class="bigb w54"><svg class="s32"><use href="#paste"/></svg>Paste<i class="tri"></i></button>
   <div>
    <button class="rb" aria-label="Cut"><svg class="s16"><use href="#cut"/></svg></button>
    <button class="rb" aria-label="Copy clip"><svg class="s16"><use href="#cp"/></svg></button>
   </div>
  </div>
  <div class="plabel w-100">Clipboard</div>
 </section>
 <section class="panel p-view">
  <div class="pbody d-flex justify-content-center">
   <button class="bigb"><svg class="s32"><use href="#base"/></svg>Base<i class="tri"></i></button>
  </div>
  <button class="plabel w-100 position-relative justify-content-start ps-1">View <i class="tri big"></i><svg class="launch" width="8" height="8"><use href="#launch"/></svg></button>
 </section>
</div>
<div class="ftabs d-flex">
 <a class="ftab" href="#"><svg class="shape" viewBox="0 0 125 22" preserveAspectRatio="none"><path d="M-4 22q6-2 6-10 1-11 9-11h104q8 0 9 11v10z" fill="#575757"/></svg><span>Start</span></a>
 <div class="ftab text-white"><svg class="shape" viewBox="0 0 124 22" preserveAspectRatio="none"><path d="M-12 22Q-4 20-2 12 1 0 8 0h101q8 0 10 12 2 8 9 10z" fill="url(#gt)"/></svg><span class="flex-fill">Drawing1*</span><button aria-label="Close tab"><svg width="8" height="8"><path d="M1 1l6 6M7 1L1 7" stroke="#333" stroke-width="1.800"/></svg></button></div>
 <button aria-label="New drawing" class="newtab"><svg width="24" height="16"><path d="M1 1h16q6 2 6 14H9Q3 11 1 1z" fill="#5a5a5a"/><path d="M8 8h9M12.500 3.500v9" stroke="#ccc" stroke-width="2"/></svg></button>
</div>
</header>

<main class="d-flex space">
<div class="position-relative flex-fill overflow-hidden">
 <svg class="draw" aria-label="Drawing area">
  <g transform="translate(0 -173)">
  <g stroke="#28313c"><path d="M129.500 0v1100M415.500 0v1100M701.500 0v1100M1273.500 0v1100M1558.500 0v1100M1844.500 0v1100M0 329.500h3000M0 615.500h3000M0 901.500h272"/></g>
  <path d="M987.500 901v300" stroke="#343d50"/>
  <path d="M272 901.500h716" stroke="#8f939b"/>
  <path d="M988 901.500h2000" stroke="#702b30"/>
  <path d="M701 405.700A572 572 0 0 1 987.500 329.500V472.500A429 429 0 0 0 772.700 529.500z" fill="#8eabe3" stroke="#2d62c4" stroke-width="4"/>
  <path d="M704 406.700A569 569 0 0 1 985.500 332V470.500A431 431 0 0 0 773.700 526z" fill="none" stroke="#6593ee" stroke-width="3"/>
  <path d="M701 405.700A572 572 0 0 1 987.500 329.500V472.500A429 429 0 0 0 772.700 529.500z" fill="none" stroke="#d3e1fc" stroke-width="1.300"/>
  <path d="M987.500 173v155" stroke="#2a7a2e"/>
  <circle cx="987" cy="672.500" r="18.200" fill="#d8d9d2" stroke="#fff" stroke-width="1.500"/>
  <circle cx="987" cy="901.500" r="36" fill="#d8d9d2" stroke="#fff" stroke-width="1.500"/>
  <path d="M951 901.500h36" stroke="#85828f"/><path d="M987.500 902v36" stroke="#73757e"/>
  <path d="M987.500 474v380" stroke="#2a7a2e"/>
  <path d="M984 852h6v48h-6z" fill="#5caa56"/><path d="M984.500 853v48M989.500 853v48" stroke="#348232"/>
  <path d="M988 898.500h46l3 3-3 2.500h-46z" fill="#c25a59"/><path d="M988 898.500h47M988 903.500h47" stroke="#8f3c3d"/>
  <path d="M984.500 886.500h12l-12 12h11" fill="none" stroke="#1b6df5"/><rect x="984" y="899" width="5" height="4" fill="#3b7fce"/>
  <path d="M984 839l6 6v6M996 839l-6 6" fill="none" stroke="#1ca51c"/>
  <path d="M1031 886l12 12M1043 886l-12 12" stroke="#d23a3a"/>
  <path d="M932.500 580.500h6v6h-6z" fill="none" stroke="#fff"/>
  </g>
 </svg>
 <span class="vplabel">[−][Front][Conceptual]</span>
 <div class="mdi d-flex align-items-center">
  <button aria-label="Minimize drawing"><svg width="11" height="12"><path d="M0 8h11v4H0z" fill="#ddd"/></svg></button>
  <button aria-label="Restore drawing"><svg width="11" height="12"><path d="M1 4.500h6.500V11H1zM3 3.500V1h7v7.500H8.500" fill="none" stroke="#eee" stroke-width="1.600"/></svg></button>
  <button aria-label="Close drawing"><svg width="10" height="12"><path d="M1 2l8 8M9 2l-8 8" stroke="#eee" stroke-width="2.200"/></svg></button>
 </div>
 <svg class="position-absolute top-0 end-0" width="160" height="150" aria-label="View cube">
  <g transform="translate(-1752 -173)"><ellipse cx="1828" cy="307.500" rx="62" ry="4.500" fill="none" stroke="#555a61" stroke-width="2.500"/><path d="M1758 306.500h9M1770 307h10M1883 307h15M1822 313h15" stroke="#c9cacb" stroke-width="2"/><path d="M1803.500 253.500h51v51h-51z" fill="#b9babb" stroke="#77797b"/><path d="M1813 263h32v32h-32z" fill="#a7abb6"/><text x="1829" y="284" text-anchor="middle" font-size="13" font-weight="700" fill="#4a4e58" font-family="Noto Sans">TOP</text></g>
 </svg>
 <button class="ucsname d-flex align-items-center justify-content-between pe-1">Unnamed<svg width="9" height="6"><path d="M.5.500h8L4.500 5z" fill="none" stroke="#777a84"/></svg></button>
 <div class="navbarv" role="toolbar" aria-label="Navigation bar"><svg width="30" height="210" fill="none" stroke="#42464d">
  <circle cx="25" cy="4.500" r="4" fill="#4b4f53" stroke="none"/><path d="M23 2.500l4 4M27 2.500l-4 4" stroke="#6a6e72"/>
  <path d="M15 19h11v11a11 11 0 1 1-11-11z" stroke-width="1.300" fill="#575c66"/><circle cx="15" cy="30" r="6"/><path d="M10 34l-3 4M20 34l3 4"/>
  <path d="M13 49h5l-2.500 3zM13 119h5l-2.500 3zM13 157h5l-2.500 3z" fill="#3a3e44" stroke="none"/><path d="M2 56.500h26M2 164.500h26" stroke="#6c7074"/>
  <path d="M9 83L3 74q0-3 3-1l3 3-2-10q2-3 3 0l2 7V62q2-3 4 0v10l2-9q3-1 3 1l-1 10 3-5q3-1 2 2l-4 9-2 3z" stroke-width="1.300"/>
  <path d="M4 90l15 15M19 90L4 105M4 94v-4h4M15 90h4v4M4 101v4h4" stroke-width="1.500"/><circle cx="19" cy="104" r="5" fill="#5e6265" stroke-width="1.300"/><path d="M22 107l5 5" stroke-width="3"/>
  <path d="M13 149v-17h-3l5-5 4 5h-3v17zM4 139q0-4 9-4M17 135q9 0 9 4 0 5-18 4m4-3l-4 3 4 3" stroke-width="1.300"/>
  <path d="M4 170h5v5H4zM12 170h5v5h-5zM20 170h5v5h-5zM4 179h15v12H4zM9 182l6 3-6 3z" stroke-width="1.300"/>
  <circle cx="25" cy="205" r="4" fill="#4b4f53" stroke="none"/><path d="M23 204h4M23 206h4" stroke="#6a6e72"/></svg></div>
 <div class="prompt">Select objects:</div>
 <div class="cmdlog d-flex flex-column align-items-start"><div>Command:</div><div>Command: _arraypolar</div><div>Select objects: 1 found</div></div>
 <div class="cmd d-flex align-items-center">
  <div class="cmdl h-100 d-flex align-items-center justify-content-between px-1">
   <svg width="5" height="18"><path d="M1 0v18M4 0v18" stroke="#ccc" stroke-dasharray="2 1" stroke-width="1.500"/></svg>
   <button aria-label="Close command line"><svg width="9" height="9"><path d="M1 1l7 7M8 1L1 8" stroke="#fff" stroke-width="2"/></svg></button>
   <button aria-label="Customize"><svg width="15" height="15" viewBox="0 0 15 15"><path d="M2 1l3 3-1 2-3-1q0 4 4 4l6 6q3 0 2-3L8 6q0-5-6-5z" fill="#dfe6f0" stroke="#333" stroke-width=".6"/></svg></button>
  </div>
  <button class="recent d-flex align-items-center" aria-label="Recent commands"><svg class="s16"><use href="#arrayd"/></svg><i class="tri grey ms-1"></i></button>
  <label for="cmdin" class="mono">ARRAYPOLAR</label>
  <input id="cmdin" class="mono ms-1" value="Select objects:"><i class="caretbar"></i>
  <button aria-label="Expand history" class="ms-auto me-1"><svg width="7" height="4"><path d="M0 4h7L3.500 0z" fill="#111"/></svg></button>
 </div>
</div>
<div class="vscroll flex-shrink-0"></div>
</main>

<footer class="flex-shrink-0">
<div class="status d-flex">
 <div class="ltabs d-flex">
  <button class="ltab first text-white fw-bold"><svg viewBox="0 0 60 19" preserveAspectRatio="none"><path d="M0 0h60q-4 18-9 18H10Q5 18 0 0z" fill="url(#gt)"/></svg><span>Model</span></button>
  <button class="ltab"><svg viewBox="0 0 68 19" preserveAspectRatio="none"><path d="M4 0h60q-3 18-8 18H12Q6 18 4 0z" fill="#575757"/></svg><span>Layout1</span></button>
  <button class="ltab"><svg viewBox="0 0 68 19" preserveAspectRatio="none"><path d="M4 0h60q-3 18-8 18H12Q6 18 4 0z" fill="#575757"/></svg><span>Layout2</span></button>
  <button class="ltab plus" aria-label="New layout"><svg viewBox="0 0 24 19"><path d="M5 0h17q-1 15-6 16H1Q1 6 5 0z" fill="#575757"/><path d="M8 8.500h9M12.500 4v9" stroke="#ccc" stroke-width="1.800"/></svg></button>
 </div>
 <div class="stools d-flex ms-auto">
  <button class="sg g49 fs12 text-white">MODEL</button>
  <div class="sg g65"><button aria-label="Grid"><svg width="16" height="16"><path d="M3.500 0v16M6.500 0v16M9.500 0v16M12.500 0v16M0 3.500h16M0 6.500h16M0 9.500h16M0 12.500h16" stroke="#2d8ff0"/></svg></button><button aria-label="Snap"><svg width="15" height="15"><path d="M0 1h15M0 4h15M0 7h15M0 10h15M0 13h15" stroke="#bbb" stroke-width="1.200" stroke-dasharray="1.200 1.800"/></svg></button><i class="tri big"></i></div>
  <div class="sg g103 me-0 border-end-0"><button aria-label="Ortho"><svg width="14" height="14"><path d="M2 1v12h12M2 8h5v5" fill="none" stroke="#bbb" stroke-width="1.300"/></svg></button><button aria-label="Polar"><svg width="16" height="16" fill="none" stroke="#2d8ff0" stroke-width="1.500"><circle cx="7" cy="9" r="6"/><path d="M6 9h9M6 9l7-8"/></svg></button><i class="tri big"></i><button aria-label="Isodraft"><svg width="16" height="18"><path d="M0 1l16 15M8 0v7M8 11v7" stroke="#bbb" stroke-width="1.400"/></svg></button><i class="tri big"></i></div>
  <div class="sg g65"><button aria-label="Object snap tracking"><svg width="16" height="16"><path d="M14 1L1 13h15" fill="none" stroke="#2d8ff0" stroke-width="1.600"/><rect x="6" y="6" width="4" height="4" fill="#2d8ff0"/></svg></button><button aria-label="Object snap"><svg width="16" height="17"><path d="M3 3h11v12H3z" fill="none" stroke="#2d8ff0" stroke-width="1.600"/><rect x=".5" y=".5" width="5" height="5" fill="#0c0" stroke="#042"/></svg></button><i class="tri big"></i></div>
  <div class="sg g106"><button class="lit" aria-label="Annotation visibility"><svg class="s16" overflow="visible"><use href="#cadman"/><circle cx="13" cy="4" r="3" fill="none" stroke="currentColor"/></svg></button><button aria-label="Auto scale"><svg class="s16"><use href="#cadman"/><path d="M14 1l-4 4h5l-4 4" fill="none" stroke="currentColor"/></svg></button><button aria-label="Annotation scale"><svg class="s16"><use href="#cadman"/></svg></button><button class="text-white gap-1">1:1 <i class="tri big"></i></button></div>
  <div class="sg g41 me-0"><button aria-label="Workspace"><svg width="14" height="14"><circle cx="7" cy="7" r="4" fill="none" stroke="#bbb" stroke-width="3.500"/><circle cx="7" cy="7" r="6" fill="none" stroke="#bbb" stroke-width="2" stroke-dasharray="2.200 2.500"/></svg></button><i class="tri big"></i></div>
  <div class="sg g26"><button aria-label="Annotation monitor"><svg width="15" height="15"><path d="M0 7.500h15M7.500 0v15" stroke="#bbb" stroke-width="1.600"/></svg></button></div>
  <div class="sg g26"><button aria-label="Isolate objects"><svg width="16" height="17" fill="none" stroke="#bbb" stroke-width="1.300"><path d="M1 2h6v6H1zM7 11l4 5H4z"/><circle cx="12" cy="8" r="3"/></svg></button></div>
  <div class="sg g26"><button aria-label="Hardware acceleration"><svg width="18" height="18"><circle cx="9" cy="9" r="8" fill="#0a5aa8" stroke="#2d8ff0" stroke-width="1.500"/><path d="M8 11l4-3" stroke="#2d8ff0" stroke-width="1.500"/></svg></button></div>
  <div class="sg g51 me-0"><button aria-label="Clean screen"><svg width="16" height="13"><path d="M1 1h14v11H1z" fill="none" stroke="#ccc" stroke-width="1.300"/><path d="M9 3h4v4zM3 6v4h4z" fill="#ccc"/></svg></button><button aria-label="Customization"><svg width="15" height="13"><path d="M0 1.500h15M0 6.500h15M0 11.500h15" stroke="#ccc" stroke-width="2"/></svg></button></div>
 </div>
</div>
<div class="task d-flex align-items-center">
 <button class="tb" aria-label="Start"><svg width="16" height="16" fill="#fff"><path d="M0 2l7-1v6.500H0zM8 1l8-1v7.500H8zM0 8.500h7V15l-7-1zM8 8.500h8V16l-8-1z"/></svg></button>
 <div class="search d-flex align-items-center h-100 ps-2"><svg width="22" height="22"><circle cx="11" cy="11" r="9" fill="none" stroke="#fff" stroke-width="2.500"/></svg><input class="ms-1" aria-label="Search Windows" placeholder="Type here to search"><button aria-label="Voice search" class="me-3"><svg width="11" height="17" fill="none" stroke="#999"><rect x="3" y=".5" width="5" height="11"/><path d="M.5 8v3.500q0 2 2 2h6q2 0 2-2V8M5.500 14v2.500M3 16.500h5"/></svg></button></div>
 <button class="tb" aria-label="Task view"><svg width="20" height="16" fill="none" stroke="#fff" stroke-width="1.300"><path d="M5 1h10v14H5zM3 3H1v10h2M17 3h2v10h-2"/></svg></button>
 <button class="tb wide" aria-label="File Explorer"><svg width="22" height="20"><path d="M0 1h8l2 2h12v15H0z" fill="#f6d16b"/><path d="M0 5h22v13H0z" fill="#fbe08d"/><path d="M4 11h14v8h-4v-4H8v4H4z" fill="#39a9e0"/></svg></button>
 <button class="tb run ps-2"><svg width="22" height="22" viewBox="0 0 22 22"><circle cx="11" cy="11" r="10.500" fill="#fcd04a"/><path d="M11 11L1.900 5.750A10.500 10.500 0 0 1 20.100 5.750H11z" fill="#dd4b3e"/><path d="M11 11L1.900 5.750A10.500 10.500 0 0 0 10 21.500L15.500 13.500z" fill="#1fa15d"/><circle cx="11" cy="11" r="5" fill="#fff"/><circle cx="11" cy="11" r="4" fill="#4a8af4"/></svg>UCS (Command) | ...</button>
 <button class="tb mid" aria-label="Firefox"><svg class="ms-2" width="24" height="24" viewBox="0 0 24 24"><circle cx="12.500" cy="11" r="10" fill="#2f8bd8"/><path d="M3 5q-5 9 1 15 8 6 16 0 6-7 1-15 0 9-5 12-6 1-8-3 4 1 5-1-6-2-6-5l2-2Q5 6 3 5z" fill="#e96a1d"/><path d="M21 5q2 8-3 13-5 4-11 1 8 6 14 0 4-7 0-14z" fill="#fbbd3a"/></svg></button>
 <button class="tb mid" aria-label="MATLAB"><svg class="ms-1" width="24" height="22" viewBox="0 0 24 22"><path d="M0 12l7-3 3 3-4 4z" fill="#4b9bd4"/><path d="M7 9q4-2 7-9l-3 13-2-1z" fill="#2d6ea8"/><path d="M15 0q3 4 8 18l-5-2-5 5-3-6q4-6 5-15z" fill="#d5512a"/><path d="M15 0q0 10-5 15l3 6 2-4z" fill="#f2a04b"/></svg></button>
 <button class="tb run on"><svg width="24" height="24" viewBox="0 0 24 24"><path d="M0 0h24v24H0z" fill="#f6dcd5"/><use href="#A" x="2" y="2" width="20" height="20"/></svg>Autodesk AutoCAD...</button>
 <button class="tb mid" aria-label="Blue viewer"><svg width="24" height="24" viewBox="0 0 24 24"><ellipse cx="11" cy="11.500" rx="10.500" ry="11" fill="#4f9fd0"/><ellipse cx="12" cy="9" rx="8" ry="8" fill="#9edbf5"/><path d="M1 7q1 12 11 14l4-1Q7 17 5 4z" fill="#eef9fd"/><path d="M14 12l7-2 3 3-2 7-6 2-4-3z" fill="#1d6ea9"/></svg></button>
 <button class="tb" aria-label="Git"><svg width="24" height="24" viewBox="0 0 24 24"><path d="M12 0l5 5-5 6-5-6z" fill="#f07a76"/><path d="M6 6l5 6-5 6-6-6z" fill="#7aa7f0"/><path d="M18 6l6 6-6 6-5-6z" fill="#7cc95e"/><path d="M12 13l5 6-5 5-5-5z" fill="#f6d95c"/><path d="M12 4v15M12 13l5-3" stroke="#222" stroke-width="2.500"/><circle cx="12" cy="18" r="2" fill="#222"/></svg></button>
 <button class="tb" aria-label="Tek"><svg width="22" height="24" overflow="visible"><path d="M0 0h22v24H0z" fill="#fff"/><path d="M0 0h22v7H0z" fill="#2b63c9"/><text x="11" y="7" text-anchor="middle" font-size="8" font-weight="700" fill="#fff">Tek</text><path d="M4 12h14v9H4z" fill="#333"/><path d="M6 18l2-1q2-5 4-2 1 3 4 2" fill="none" stroke="#e8e03a"/><path d="M6 9.500h10M6 22.500h10" stroke="#000"/></svg></button>
 <div class="ms-auto d-flex align-items-center gap-2">
  <button aria-label="Hidden icons"><svg width="12" height="8"><path d="M0 7l6-6 6 6" fill="none" stroke="#fff" stroke-width="1.300"/></svg></button>
  <button aria-label="Network"><svg width="17" height="15" fill="none" stroke="#fff"><path d="M5 2.500h11v8H3V6M.5.500h4v4h-4zM9.500 10v4M5 14.500h9"/></svg></button>
  <button aria-label="Volume"><svg width="17" height="14" fill="none" stroke="#fff"><path d="M.5 5h3l4-4v12l-4-4h-3zM10 4q2 3 0 6M12 2q4 5 0 10M14 1q4 6 0 12"/></svg></button>
  <div class="clock me-1">11:55 AM<br>8/11/2017</div>
  <button aria-label="Action center"><svg width="16" height="17" fill="none" stroke="#fff" stroke-width="1.300"><path d="M1 1h14v11h-4l-3 4v-4H1z"/></svg></button>
  <span class="desk"></span>
 </div>
</div>
</footer>
</body>
</html>
